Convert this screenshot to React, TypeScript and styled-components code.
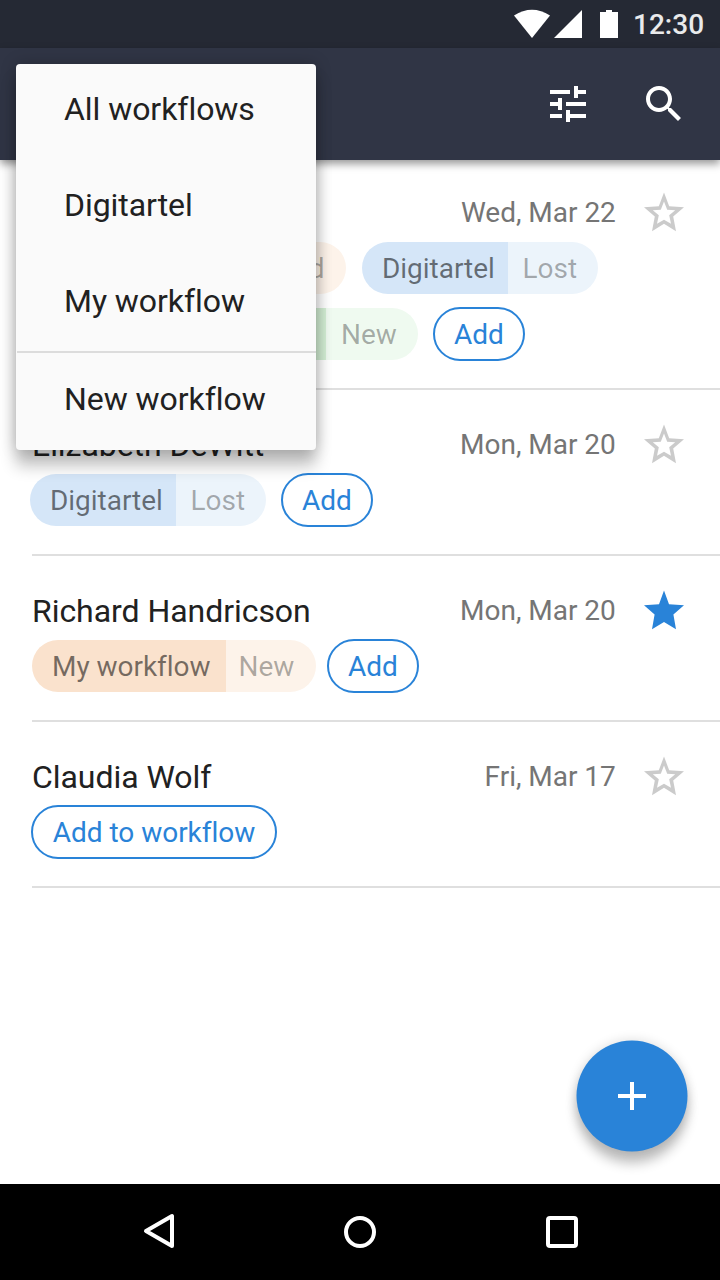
import React from "react";
import styled, { createGlobalStyle } from "styled-components";

const blue = "#2983d8";

const Global = createGlobalStyle`
  * { box-sizing: border-box; }
  body { margin: 0; background: #fff; font-family: Roboto, "Liberation Sans", sans-serif; font-variant-ligatures: none; }
  button { font: inherit; font-variant-ligatures: none; margin: 0; padding: 0; border: 0; background: none; cursor: pointer; }
`;

const Screen = styled.div`
  position: relative;
  display: flex;
  flex-direction: column;
  width: 720px;
  height: 1280px;
  overflow: hidden;
  background: #fff;
`;

const StatusBar = styled.header`
  display: flex;
  flex: none;
  align-items: center;
  justify-content: flex-end;
  height: 48px;
  padding-right: 16px;
  background: #252934;
`;

const Clock = styled.time`
  width: 71px;
  padding-top: 2px;
  margin-left: 13px;
  color: #e9eaeb;
  font-size: 28px;
  font-weight: 500;
  line-height: 48px;
`;

const AppBar = styled.div`
  position: relative;
  z-index: 1;
  display: flex;
  flex: none;
  align-items: center;
  justify-content: flex-end;
  gap: 48px;
  height: 112px;
  padding-right: 32px;
  background: #303545;
  box-shadow: 0 4px 8px rgba(0, 0, 0, 0.4);
`;

const IconButton = styled.button`
  display: flex;
  width: 48px;
  height: 48px;
`;

const List = styled.main`
  flex: 1;
  margin-top: -2px;
`;

const Contact = styled.article<{ $height: number }>`
  display: flex;
  flex-direction: column;
  height: ${(p) => p.$height}px;
  margin-left: 32px;
  padding-top: 31px;
  border-bottom: 2px solid #dfdfdf;
`;

const Heading = styled.div`
  display: flex;
  flex: none;
  align-items: center;
  height: 48px;
  padding-right: 32px;
`;

const Name = styled.h2`
  flex: 1;
  margin: 0;
  color: #212121;
  font-size: 32px;
  font-weight: 400;
  letter-spacing: -0.05px;
  line-height: 48px;
`;

const DateText = styled.span`
  margin-right: 24.2px;
  color: #757575;
  font-size: 28px;
  letter-spacing: -0.02px;
  line-height: 48px;
`;

const ChipRow = styled.div<{ $shift?: number }>`
  display: flex;
  align-items: center;
  height: 54px;
  margin-top: 4px;
  margin-left: ${(p) => p.$shift ?? 0}px;
  & + & { margin-top: 12px; }
`;

const tones = {
  orange: ["#fae2cd", "#fdf3ea"],
  blue: ["#d5e6f8", "#ecf4fb"],
  green: ["#d3efd4", "#effaf0"],
};

const Chip = styled.div<{ $gap: number }>`
  display: flex;
  height: 52px;
  margin-right: ${(p) => p.$gap}px;
  overflow: hidden;
  border-radius: 26px;
  font-size: 28px;
  letter-spacing: -0.03px;
  line-height: 54px;
  white-space: nowrap;
`;

const ChipLabel = styled.span<{ $tone: keyof typeof tones; $width: number }>`
  width: ${(p) => p.$width}px;
  padding-left: 20px;
  background: ${(p) => tones[p.$tone][0]};
  color: rgba(0, 0, 0, 0.54);
`;

const ChipStage = styled.span<{ $tone: keyof typeof tones; $width: number; $inset: number }>`
  width: ${(p) => p.$width}px;
  padding-left: ${(p) => p.$inset}px;
  background: ${(p) => tones[p.$tone][1]};
  color: rgba(0, 0, 0, 0.32);
`;

const AddButton = styled.button<{ $width: number }>`
  width: ${(p) => p.$width}px;
  height: 54px;
  padding-top: 2px;
  border: 2px solid ${blue};
  border-radius: 27px;
  color: ${blue};
  font-size: 28px;
  letter-spacing: -0.03px;
  line-height: 48px;
`;

const Menu = styled.nav`
  position: absolute;
  z-index: 2;
  top: 64px;
  left: 16px;
  width: 300px;
  height: 386px;
  border-radius: 4px;
  background: #fafafa;
  box-shadow: 0 16px 16px rgba(0, 0, 0, 0.24), 0 0 16px rgba(0, 0, 0, 0.22);
`;

const MenuItem = styled.button`
  display: block;
  width: 100%;
  height: 96px;
  padding: 0 0 6px 48px;
  color: #212121;
  font-size: 32px;
  letter-spacing: -0.05px;
  line-height: 90px;
  text-align: left;
`;

const MenuDivider = styled.div`
  height: 2px;
  margin: -1px 0 1px 1px;
  background: #dcdcdc;
`;

const Fab = styled.button`
  position: absolute;
  top: 1040px;
  left: 576px;
  display: flex;
  align-items: center;
  justify-content: center;
  width: 111px;
  height: 111px;
  border-radius: 50%;
  background: ${blue};
  box-shadow: 0 12px 12px rgba(0, 0, 0, 0.24), 0 0 12px rgba(0, 0, 0, 0.14);
  transform: translate(0.5px, 0.5px);
`;

const NavBar = styled.footer`
  display: flex;
  flex: none;
  align-items: center;
  justify-content: space-between;
  height: 96px;
  padding: 0 134px;
  background: #000;
`;

function StatusIcons() {
  return (
    <svg width="106" height="48" viewBox="0 0 106 48" fill="#fff">
      <path d="M0 15.5Q18 4.2 36 15.5L18 38Z" />
      <path d="M40 38H68V10Z" />
      <path d="M86 12H92V10H98V12H104V38H86Z" />
    </svg>
  );
}

function Star({ filled = false }: { filled?: boolean }) {
  return (
    <svg width="48" height="48" viewBox="0 0 48 48">
      {filled ? (
        <path fill={blue} d="M24 3.6L29 17.2L44 18.2L33.4 27.6L36 42.2L24 35L12 42.2L14.6 27.6L4 18.2L19 17.2Z" />
      ) : (
        <path
          fill="#cbcbcb"
          fillRule="evenodd"
          d="M24 3.6L29.2 17.2L44 18.2L33.2 27.6L36 42.2L24 34.8L12 42.2L14.8 27.6L4 18.2L18.8 17.2ZM24 12.6L20.8 20.7L12.8 21.3L18.8 26.3L17 34.8L24 30.8L31 34.8L29.2 26.3L35.2 21.3L27.2 20.7Z"
        />
      )}
    </svg>
  );
}

type ChipData = {
  label: string;
  stage: string;
  tone: keyof typeof tones;
  widths: [number, number];
  inset: number;
  gap: number;
};

function WorkflowChip({ label, stage, tone, widths, inset, gap }: ChipData) {
  return (
    <Chip $gap={gap}>
      <ChipLabel $tone={tone} $width={widths[0]}>{label}</ChipLabel>
      <ChipStage $tone={tone} $width={widths[1]} $inset={inset}>{stage}</ChipStage>
    </Chip>
  );
}

function ContactHeading({ name, date, starred }: { name: string; date: string; starred?: boolean }) {
  return (
    <Heading>
      <Name>{name}</Name>
      <DateText>{date}</DateText>
      <IconButton aria-label="Star"><Star filled={starred} /></IconButton>
    </Heading>
  );
}

export default function App() {
  return (
    <Screen>
      <Global />
      <StatusBar>
        <StatusIcons />
        <Clock>12:30</Clock>
      </StatusBar>
      <AppBar>
        <IconButton aria-label="Filter">
          <svg width="48" height="48" viewBox="0 0 24 24" fill="#fff">
            <path d="M3 17v2h6v-2H3zM3 5v2h10V5H3zm10 16v-2h8v-2h-8v-2h-2v6h2zM7 9v2H3v2h4v2h2V9H7zm14 4v-2H11v2h10zm-6-4h2V7h4V5h-4V3h-2v6z" />
          </svg>
        </IconButton>
        <IconButton aria-label="Search">
          <svg width="48" height="48" viewBox="0 0 24 24" fill="#fff">
            <path d="M15.5 14h-.79l-.28-.27C15.41 12.59 16 11.11 16 9.5 16 5.91 13.09 3 9.5 3S3 5.91 3 9.5 5.91 16 9.5 16c1.61 0 3.09-.59 4.23-1.57l.27.28v.79l5 4.99L20.49 19l-4.99-5zm-6 0C7.01 14 5 11.99 5 9.5S7.01 5 9.5 5 14 7.01 14 9.5 11.99 14 9.5 14z" />
          </svg>
        </IconButton>
      </AppBar>
      <List>
        <Contact $height={232}>
          <ContactHeading name="" date="Wed, Mar 22" />
          <ChipRow>
            <WorkflowChip label="My workflow" stage="Closed" tone="orange" widths={[194, 120]} inset={12.5} gap={16} />
            <WorkflowChip label="Digitartel" stage="Lost" tone="blue" widths={[146, 90]} inset={14.5} gap={0} />
          </ChipRow>
          <ChipRow>
            <WorkflowChip label="" stage="New" tone="green" widths={[294, 92]} inset={15} gap={15} />
            <AddButton $width={92}>Add</AddButton>
          </ChipRow>
        </Contact>
        <Contact $height={166}>
          <ContactHeading name="Elizabeth DeWitt" date="Mon, Mar 20" />
          <ChipRow $shift={-2}>
            <WorkflowChip label="Digitartel" stage="Lost" tone="blue" widths={[146, 90]} inset={14.5} gap={15} />
            <AddButton $width={92}>Add</AddButton>
          </ChipRow>
        </Contact>
        <Contact $height={166}>
          <ContactHeading name="Richard Handricson" date="Mon, Mar 20" starred />
          <ChipRow>
            <WorkflowChip label="My workflow" stage="New" tone="orange" widths={[194, 90]} inset={12.5} gap={11} />
            <AddButton $width={92}>Add</AddButton>
          </ChipRow>
        </Contact>
        <Contact $height={166}>
          <ContactHeading name="Claudia Wolf" date="Fri, Mar 17" />
          <ChipRow $shift={-1}>
            <AddButton $width={246}>Add to workflow</AddButton>
          </ChipRow>
        </Contact>
      </List>
      <NavBar>
        <svg width="48" height="48" viewBox="0 0 48 48" fill="none" stroke="#fff" strokeWidth="4" strokeLinejoin="round">
          <path d="M12 23L38 8V38Z" />
        </svg>
        <svg width="48" height="48" viewBox="0 0 48 48" fill="none" stroke="#fff" strokeWidth="4">
          <circle cx="24" cy="24" r="14" />
        </svg>
        <svg width="48" height="48" viewBox="0 0 48 48" fill="none" stroke="#fff" strokeWidth="4">
          <rect x="10" y="10" width="28" height="28" rx="2" />
        </svg>
      </NavBar>
      <Menu>
        <MenuItem>All workflows</MenuItem>
        <MenuItem>Digitartel</MenuItem>
        <MenuItem>My workflow</MenuItem>
        <MenuDivider />
        <MenuItem>New workflow</MenuItem>
      </Menu>
      <Fab aria-label="Create">
        <svg width="29" height="29" viewBox="0 0 29 29" fill="#fff">
          <path d="M12.5 .5h4v12h12v4h-12v12h-4v-12H.5v-4h12z" />
        </svg>
      </Fab>
    </Screen>
  );
}
